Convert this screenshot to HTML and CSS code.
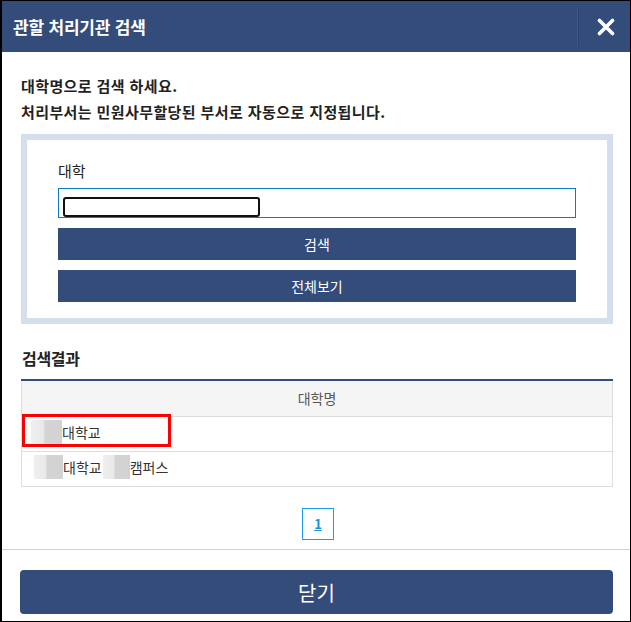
FILE: index.html
```html
<!DOCTYPE html>
<html lang="ko">
<head>
<meta charset="utf-8">
<title>관할 처리기관 검색</title>
<link rel="stylesheet" href="styles.css">
</head>
<body>
<div class="modal">
  <div class="modal-header">
    <h1 class="modal-title">관할 처리기관 검색</h1>
    <button class="close-x" aria-label="닫기">
      <svg width="18" height="18" viewBox="0 0 18 18"><path d="M2.5 2.5 L15.5 15.5 M15.5 2.5 L2.5 15.5" stroke="#fff" stroke-width="3.6" stroke-linecap="round"/></svg>
    </button>
  </div>
  <div class="modal-body">
    <p class="guide">대학명으로 검색 하세요.<br>처리부서는 민원사무할당된 부서로 자동으로 지정됩니다.</p>
    <div class="search-box">
      <label class="field-label">대학</label>
      <div class="input-wrap">
        <input class="text-input" type="text">
        <span class="redact"></span>
      </div>
      <button class="btn-primary">검색</button>
      <button class="btn-primary">전체보기</button>
    </div>
    <h2 class="section-title">검색결과</h2>
    <table class="result-table">
      <thead><tr><th>대학명</th></tr></thead>
      <tbody>
        <tr><td><span class="cell-wrap"><span class="blur"></span>대학교<span class="highlight"></span></span></td></tr>
        <tr><td><span class="cell-wrap pad"><span class="blur narrow"></span>대학교 <span class="blur small"></span>캠퍼스</span></td></tr>
      </tbody>
    </table>
    <div class="pagination"><a class="page current" href="#">1</a></div>
  </div>
  <div class="modal-footer">
    <button class="btn-close">닫기</button>
  </div>
</div>
</body>
</html>
```
FILE: styles.css
```css
* { box-sizing: border-box; }
html, body { margin: 0; padding: 0; background: #fff; }
body { font-family: "Noto Sans CJK KR", "Noto Sans", sans-serif; color: #222; }

.modal {
  width: 631px;
  height: 622px;
  border: 1px solid #000;
  border-left-width: 2px;
  display: flex;
  flex-direction: column;
  background: #fff;
}

.modal-header {
  height: 51px;
  background: #334c7a;
  display: flex;
  align-items: center;
  padding-left: 11px;
}
.modal-title {
  margin: 0;
  flex: 1;
  color: #fff;
  font-size: 17px;
  font-weight: 700;
  letter-spacing: -0.2px;
  line-height: 24px;
}
.close-x {
  width: 52px;
  height: 40px;
  margin-top: 6px;
  align-self: flex-start;
  border: 0;
  border-left: 1px solid #2d4470;
  box-shadow: -1px 0 0 #3d5684;
  background: transparent;
  display: flex;
  align-items: center;
  justify-content: center;
  padding: 0 0 0 2px;
  margin-right: 0;
}

.modal-body {
  flex: 1;
  padding: 21px 17px 0 19px;
}
.guide {
  margin: 0;
  font-size: 15px;
  font-weight: 700;
  line-height: 26px;
  letter-spacing: 0.4px;
  color: #222;
}

.search-box {
  margin-top: 9px;
  border: 6px solid #d5deec;
  padding: 20px 31px 16px;
  display: flex;
  flex-direction: column;
}
.field-label {
  font-size: 15px;
  line-height: 22px;
  color: #222;
  margin-bottom: 6px;
}
.input-wrap { position: relative; }
.text-input {
  display: block;
  width: 100%;
  height: 30px;
  border: 1px solid #0a7cc4;
  outline: none;
  padding: 0 6px;
  margin: 0;
  font: inherit;
}
.redact {
  position: absolute;
  left: 5px;
  top: 9px;
  width: 197px;
  height: 20px;
  border: 2px solid #111;
  border-radius: 3px;
  background: #fff;
}
.btn-primary {
  margin-top: 10px;
  height: 32px;
  border: 0;
  background: #334c7a;
  color: #fff;
  font-family: inherit;
  font-size: 14px;
  padding: 0;
}

.section-title {
  margin: 22px 0 9px 1px;
  font-size: 16px;
  font-weight: 700;
  line-height: 24px;
  letter-spacing: -0.3px;
  color: #222;
}

.result-table {
  width: 100%;
  border-collapse: collapse;
  border-top: 2px solid #334c7a;
  font-size: 14px;
}
.result-table th {
  height: 36px;
  background: #f5f5f5;
  font-weight: 400;
  color: #555;
  border: 1px solid #ddd;
  border-top: 0;
  text-align: center;
  padding: 0;
}
.result-table td {
  height: 35px;
  border: 1px solid #ddd;
  padding: 0 0 0 9px;
  color: #333;
}
.cell-wrap {
  position: relative;
  display: inline-flex;
  align-items: center;
}
.cell-wrap.pad { padding-left: 3px; }
.blur {
  display: inline-block;
  width: 31px;
  height: 24px;
  background: linear-gradient(90deg, #efefef 0%, #e9e9e9 40%, #d4d4d4 45%, #d2d2d2 100%);
}
.blur.narrow { width: 29px; }
.blur.small {
  width: 27px;
  margin-left: 1px;
}
.highlight {
  position: absolute;
  left: -9px;
  top: -6px;
  width: 149px;
  height: 33px;
  border: 3px solid #f00;
}

.pagination {
  margin-top: 21px;
  display: flex;
  justify-content: center;
  padding-left: 2px;
}
.page {
  width: 32px;
  height: 32px;
  border: 1px solid #1e9be8;
  color: #1a8fe0;
  font-size: 13px;
  font-weight: 700;
  line-height: 30px;
  text-align: center;
  text-decoration: underline;
}

.modal-footer {
  border-top: 1px solid #cfcfcf;
  padding: 20px 17px 7px 18px;
}
.btn-close {
  width: 100%;
  height: 44px;
  border: 0;
  border-radius: 4px;
  background: #334c7a;
  color: #fff;
  font-family: inherit;
  font-size: 20px;
  padding: 0;
}
```
